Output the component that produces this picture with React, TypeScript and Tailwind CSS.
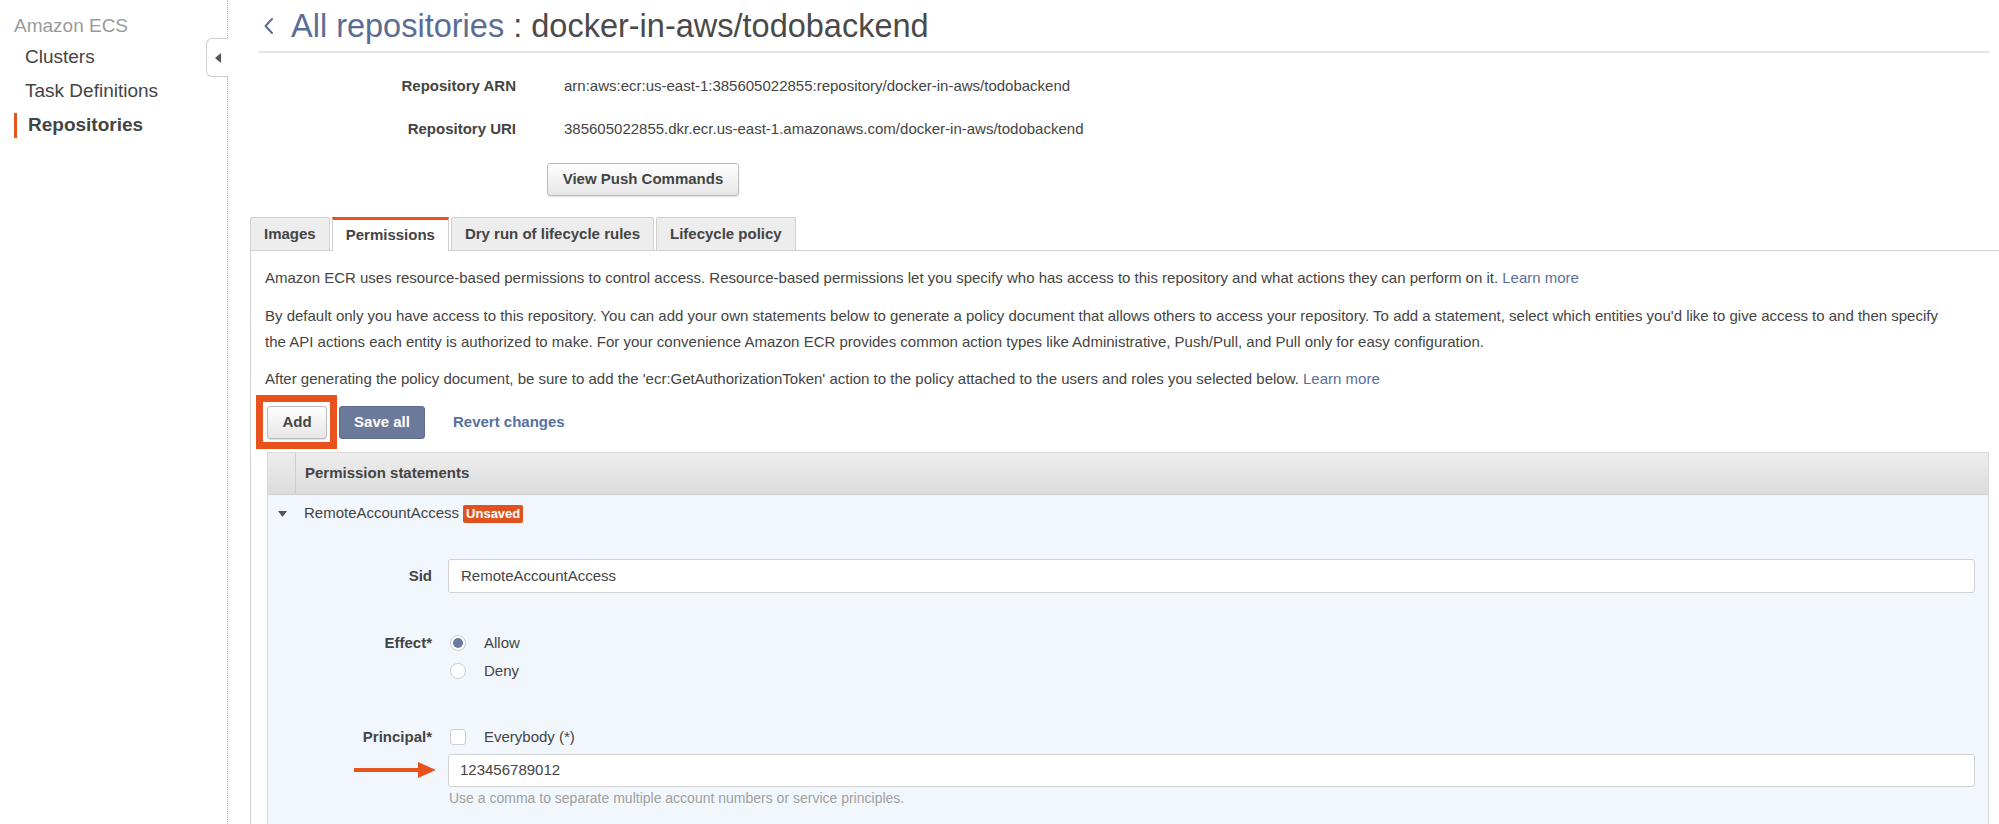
import React from 'react';

// Sidebar navigation entries
const navItems = [
  { id: 'clusters', label: 'Clusters', active: false },
  { id: 'task-definitions', label: 'Task Definitions', active: false },
  { id: 'repositories', label: 'Repositories', active: true },
];

const tabs = [
  { id: 'images', label: 'Images', active: false },
  { id: 'permissions', label: 'Permissions', active: true },
  { id: 'dry-run', label: 'Dry run of lifecycle rules', active: false },
  { id: 'lifecycle', label: 'Lifecycle policy', active: false },
];

function Sidebar() {
  return (
    <aside className="relative w-[228px] shrink-0 border-r border-dotted border-[#b5b5b5] bg-white">
      <div className="pl-[14px] pt-[14px] text-[19px] leading-[24px] text-[#9a9a9a]">Amazon ECS</div>
      <nav className="mt-[2px] flex flex-col">
        {navItems.map((item) => (
          <div key={item.id} className="flex h-[34px] items-center">
            {item.active ? (
              <>
                <span className="ml-[14px] h-[25px] w-[3px] bg-[#e8531d]" />
                <span className="ml-[11px] text-[19px] font-bold text-[#444]">{item.label}</span>
              </>
            ) : (
              <span className="ml-[25px] text-[19px] text-[#444]">{item.label}</span>
            )}
          </div>
        ))}
      </nav>

      {/* collapse handle */}
      <button className="absolute right-[-1px] top-[38px] flex h-[39px] w-[22px] items-center justify-center rounded-l-[6px] border border-r-0 border-[#cfcfcf] bg-white">
        <svg className="h-[10px] w-[6px]" viewBox="0 0 6 10">
          <path d="M6 0 L0 5 L6 10 Z" fill="#555" />
        </svg>
      </button>
    </aside>
  );
}

function DetailRow({ label, value }: { label: string; value: string }) {
  return (
    <div className="flex h-[22px] items-center">
      <div className="w-[266px] text-right text-[15px] font-bold text-[#444]">{label}</div>
      <div className="ml-[48px] text-[15px] text-[#444]">{value}</div>
    </div>
  );
}

function Radio({ checked, label }: { checked: boolean; label: string }) {
  return (
    <div className="flex h-[28px] items-center">
      <span className="ml-[2px] flex h-[16px] w-[16px] items-center justify-center rounded-full border border-[#cdcdcd] bg-white">
        {checked && <span className="h-[10px] w-[10px] rounded-full bg-[#6a7ca0]" />}
      </span>
      <span className="ml-[18px] text-[15px] text-[#444]">{label}</span>
    </div>
  );
}

export default function App() {
  return (
    <div className="flex h-[824px] w-full overflow-hidden bg-white font-['Liberation_Sans',Arial,sans-serif] text-[#444]">
      <Sidebar />

      <main className="min-w-0 flex-1 pl-[22px]">
        {/* Header */}
        <div className="ml-[9px] mr-[10px] flex h-[53px] items-center border-b-2 border-[#e3e3e3]">
          <svg className="ml-[4px] h-[18px] w-[11px]" viewBox="0 0 11 18" fill="none">
            <path d="M9 2 L2.5 9 L9 16" stroke="#5b6d95" strokeWidth={2} strokeLinecap="round" strokeLinejoin="round" />
          </svg>
          <h1 className="ml-[17px] text-[32.5px] leading-[36px] text-[#4a4a4a]">
            <span className="text-[#5b6d95]">All repositories</span> : docker-in-aws/todobackend
          </h1>
        </div>

        {/* Repository details */}
        <div className="mt-[22px] flex flex-col gap-[21px]">
          <DetailRow label="Repository ARN" value="arn:aws:ecr:us-east-1:385605022855:repository/docker-in-aws/todobackend" />
          <DetailRow label="Repository URI" value="385605022855.dkr.ecr.us-east-1.amazonaws.com/docker-in-aws/todobackend" />
        </div>
        <button className="ml-[297px] mt-[23px] h-[33px] w-[192px] rounded-[3px] border border-[#bcbcbc] bg-gradient-to-b from-white to-[#e6e6e6] text-[15px] font-bold text-[#444] shadow-[0_1px_1px_rgba(0,0,0,0.12)]">
          View Push Commands
        </button>

        {/* Tabs */}
        <div className="mt-[21px] flex items-end gap-[2px]">
          {tabs.map((tab) =>
            tab.active ? (
              <div
                key={tab.id}
                className="relative z-10 mb-[-1px] flex h-[34px] items-center border-x border-t-[3px] border-x-[#d0d0d0] border-t-[#e8531d] bg-white px-[13px] text-[15px] font-bold text-[#444]"
              >
                {tab.label}
              </div>
            ) : (
              <div
                key={tab.id}
                className="flex h-[33px] items-center rounded-t-[2px] border border-b-0 border-[#d0d0d0] bg-[#ededed] px-[13px] text-[15px] font-bold text-[#444]"
              >
                {tab.label}
              </div>
            )
          )}
        </div>

        {/* Tab panel */}
        <div className="border-l border-t border-[#d0d0d0] pl-[14px] pr-[10px] pt-[14px]">
          <p className="text-[15px] leading-[26px] text-[#444]">
            Amazon ECR uses resource-based permissions to control access. Resource-based permissions let you specify who has access to this repository and what actions they can perform on it.{' '}
            <span className="text-[#5a6f9c]">Learn more</span>
          </p>
          <p className="mt-[12px] text-[15px] leading-[26px] text-[#444]">
            By default only you have access to this repository. You can add your own statements below to generate a policy document that allows others to access your repository. To add a statement, select which entities you'd like to give access to and then specify
            <br />
            the API actions each entity is authorized to make. For your convenience Amazon ECR provides common action types like Administrative, Push/Pull, and Pull only for easy configuration.
          </p>
          <p className="mt-[11px] text-[15px] leading-[26px] text-[#444]">
            After generating the policy document, be sure to add the 'ecr:GetAuthorizationToken' action to the policy attached to the users and roles you selected below.{' '}
            <span className="text-[#5a6f9c]">Learn more</span>
          </p>

          {/* Actions */}
          <div className="ml-[2px] mt-[14px] flex items-center">
            <div className="relative">
              <button className="h-[33px] w-[60px] rounded-[3px] border border-[#bcbcbc] bg-gradient-to-b from-white to-[#e6e6e6] text-[15px] font-bold text-[#444] shadow-[0_1px_1px_rgba(0,0,0,0.12)]">
                Add
              </button>
              <span className="pointer-events-none absolute bottom-[-10px] left-[-11px] right-[-10px] top-[-11px] border-[7px] border-[#e8531d]" />
            </div>
            <button className="ml-[12px] h-[33px] w-[86px] rounded-[3px] border border-[#5d6c8c] bg-[#6b7a9b] text-[15px] font-bold text-white">
              Save all
            </button>
            <button className="ml-[28px] text-[15px] font-bold text-[#56709f]">Revert changes</button>
          </div>

          {/* Permission statements table */}
          <div className="ml-[2px] mt-[13px] border-x border-t border-[#dadada]">
            <div className="flex h-[42px] items-stretch border-b border-[#cfcfcf] bg-gradient-to-b from-[#ededed] to-[#dcdcdc]">
              <div className="w-[28px] border-r border-[#cdcdcd]" />
              <div className="flex items-center pl-[9px] text-[15px] font-bold text-[#444]">Permission statements</div>
            </div>

            <div className="bg-[#f1f7fd]">
              <div className="flex h-[37px] items-center">
                <div className="flex w-[28px] justify-center">
                  <svg className="h-[6px] w-[9px]" viewBox="0 0 9 6">
                    <path d="M0 0 H9 L4.5 6 Z" fill="#555" />
                  </svg>
                </div>
                <span className="ml-[8px] text-[15px] text-[#444]">RemoteAccountAccess</span>
                <span className="ml-[4px] flex h-[18px] items-center rounded-[2px] bg-[#df531f] px-[3px] text-[13px] font-bold text-white">
                  Unsaved
                </span>
              </div>

              {/* Form */}
              <div className="pb-[40px] pr-[13px] pt-[27px]">
                <div className="flex items-center">
                  <div className="w-[164px] text-right text-[15px] font-bold text-[#444]">Sid</div>
                  <div className="ml-[16px] flex h-[34px] flex-1 items-center rounded-[3px] border border-[#d2d2d2] bg-white pl-[12px] text-[15px] text-[#444]">
                    RemoteAccountAccess
                  </div>
                </div>

                <div className="mt-[36px] flex">
                  <div className="w-[164px] text-right text-[15px] font-bold leading-[28px] text-[#444]">Effect*</div>
                  <div className="ml-[16px] flex flex-col">
                    <Radio checked label="Allow" />
                    <Radio checked={false} label="Deny" />
                  </div>
                </div>

                <div className="mt-[38px] flex">
                  <div className="w-[164px] text-right text-[15px] font-bold leading-[28px] text-[#444]">Principal*</div>
                  <div className="ml-[16px] flex flex-1 flex-col">
                    <div className="flex h-[28px] items-center">
                      <span className="ml-[2px] h-[16px] w-[16px] rounded-[3px] border border-[#cdcdcd] bg-white" />
                      <span className="ml-[18px] text-[15px] text-[#444]">Everybody (*)</span>
                    </div>
                    <div className="relative mt-[3px]">
                      <div className="flex h-[33px] items-center rounded-[3px] border border-[#d2d2d2] bg-white pl-[11px] text-[15px] text-[#444]">
                        123456789012
                      </div>
                      {/* annotation arrow */}
                      <svg className="absolute left-[-94px] top-[8px] h-[16px] w-[82px]" viewBox="0 0 82 16">
                        <path d="M0 8 H66" stroke="#e8531d" strokeWidth={4} />
                        <path d="M64 0 L82 8 L64 16 Z" fill="#e8531d" />
                      </svg>
                    </div>
                    <div className="ml-[1px] mt-[3px] text-[14px] leading-[16px] text-[#a0a0a0]">
                      Use a comma to separate multiple account numbers or service principles.
                    </div>
                  </div>
                </div>
              </div>
            </div>
          </div>
        </div>
      </main>
    </div>
  );
}
